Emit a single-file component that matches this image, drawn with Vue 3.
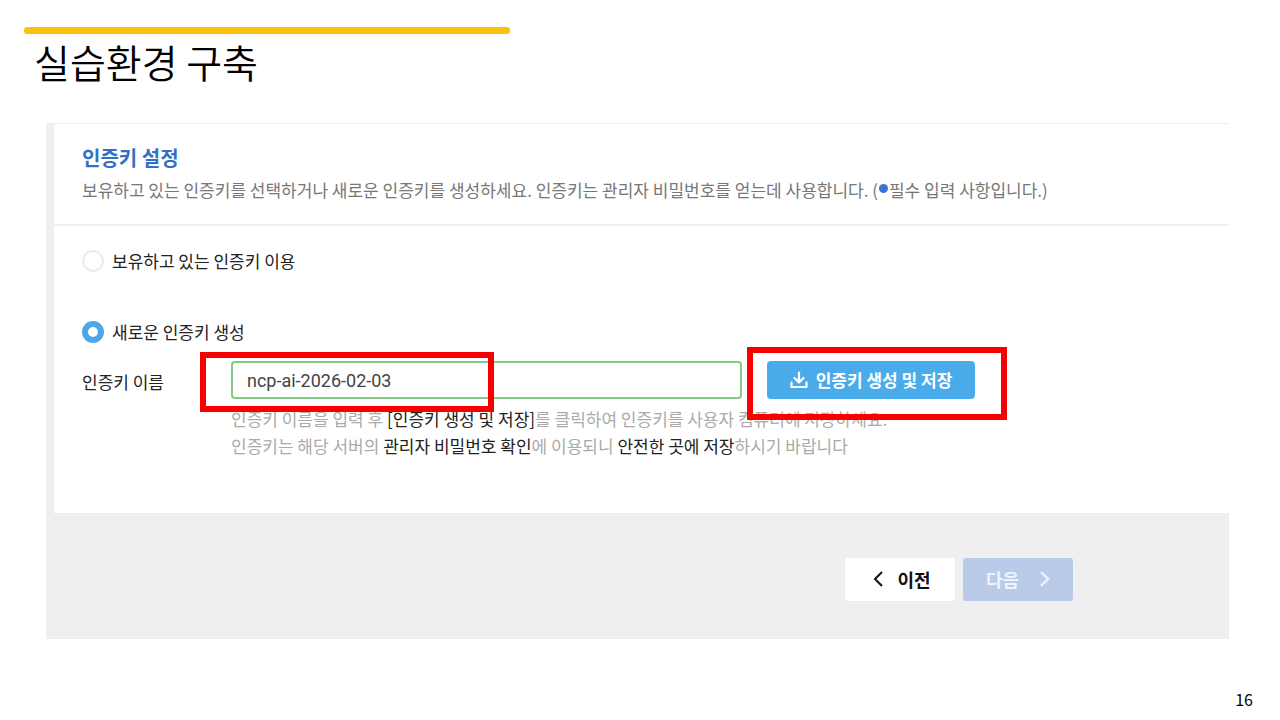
<template>
  <main class="slide">
    <div class="accent"></div>
    <h1 class="title">실습환경 구축</h1>

    <section class="panel">
      <form class="card" @submit.prevent>
        <header class="card-header">
          <h2>인증키 설정</h2>
          <p>
            보유하고 있는 인증키를 선택하거나 새로운 인증키를 생성하세요. 인증키는 관리자 비밀번호를 얻는데 사용합니다. (<span class="required"></span>필수 입력 사항입니다.)
          </p>
        </header>

        <div class="card-body">
          <div class="options">
            <label v-for="o in options" :key="o.value" class="option">
              <input v-model="mode" type="radio" name="mode" :value="o.value" />
              {{ o.label }}
            </label>
          </div>

          <div class="field">
            <label class="field-label" for="key-name">인증키 이름</label>
            <div class="field-main">
              <div class="controls">
                <div class="input-wrap">
                  <input id="key-name" v-model="keyName" class="key-input" type="text" />
                  <span class="mark mark-input"></span>
                </div>
                <div class="button-wrap">
                  <button class="create" type="button">
                    <svg width="18" height="18" viewBox="0 0 18 18" fill="none" stroke="currentColor" stroke-width="2.2" stroke-linecap="round" stroke-linejoin="round">
                      <path d="M9 1.500V11M4.500 7 9 11.500 13.500 7" />
                      <path d="M1.500 11.500V16H16.500V11.500" />
                    </svg>
                    인증키 생성 및 저장
                  </button>
                  <span class="mark mark-button"></span>
                </div>
              </div>
              <p class="help">
                인증키 이름을 입력 후 <b>[인증키 생성 및 저장]</b>를 클릭하여 인증키를 사용자 컴퓨터에 저장하세요.<br />
                인증키는 해당 서버의 <b>관리자 비밀번호 확인</b>에 이용되니 <b>안전한 곳에 저장</b>하시기 바랍니다
              </p>
            </div>
          </div>
        </div>
      </form>

      <div class="actions">
        <button class="nav prev" type="button">
          <svg width="10" height="16" viewBox="0 0 10 16" fill="none" stroke="currentColor" stroke-width="2">
            <path d="M9 1 2 8l7 7" />
          </svg>
          이전
        </button>
        <button class="nav next" type="button" disabled>
          다음
          <svg width="10" height="16" viewBox="0 0 10 16" fill="none" stroke="currentColor" stroke-width="2.4">
            <path d="m1 1 7 7-7 7" />
          </svg>
        </button>
      </div>
    </section>

    <footer class="page-number">16</footer>
  </main>
</template>

<script setup>
import { ref } from 'vue'

const options = [
  { value: 'existing', label: '보유하고 있는 인증키 이용' },
  { value: 'new', label: '새로운 인증키 생성' }
]

const mode = ref('new')
const keyName = ref('ncp-ai-2026-02-03')
</script>

<style>
body { margin: 0; background: #fff; }
</style>

<style scoped>
* { box-sizing: border-box; }
.slide {
  padding-top: 27px;
  font-family: "Noto Sans CJK KR", sans-serif;
  font-size: 17px;
  line-height: 28px;
  color: #222;
}
h1, h2, p { margin: 0; }
button, input { font: inherit; }

.accent { width: 38%; height: 7px; margin-left: 24px; border-radius: 3px; background: #fdc00c; }
.title {
  padding: 3px 34px 0;
  font-size: 39px;
  font-weight: 350;
  line-height: 48px;
  color: #000;
}

.panel { margin: 38px 51px 0 46px; padding: 1px 0 0 8px; background: #efefef; }
.card { background: #fff; border-radius: 4px 0 0 0; }
.card-header { padding: 20px 28px 20px; border-bottom: 2px solid #efefef; }
.card-header h2 { margin-bottom: 4px; font-size: 20px; font-weight: 700; line-height: 28px; color: #346fc6; }
.card-header p { color: #777; }
.required {
  display: inline-block;
  width: 9px;
  height: 9px;
  margin: 0 1px;
  border-radius: 50%;
  background: #3c74d4;
  vertical-align: 4px;
}

.card-body { padding: 21px 28px 54px; }
.options { display: flex; flex-direction: column; align-items: flex-start; gap: 43px; }
.option { display: flex; align-items: center; gap: 8px; }
.option input {
  appearance: none;
  width: 22px;
  height: 22px;
  margin: 0;
  border: 2px solid #ececec;
  border-radius: 50%;
  background: #fff;
}
.option input:checked { border: 6px solid #4aa8e8; }

.field { display: flex; margin-top: 15px; }
.field-label { flex: 0 0 149px; line-height: 42px; }
.field-main { flex: 1; min-width: 0; }
.controls { display: flex; gap: 25px; }
.input-wrap { position: relative; flex: 0 1 511px; }
.key-input {
  display: block;
  width: 100%;
  height: 38px;
  padding: 0 14px;
  border: 2px solid #83cb80;
  border-radius: 4px;
  background: #fff;
  font-family: Roboto, sans-serif;
  font-size: 18px;
  color: #444;
}
.button-wrap { position: relative; }
.create {
  display: flex;
  align-items: center;
  justify-content: center;
  gap: 8px;
  width: 208px;
  height: 38px;
  padding: 0;
  border: 0;
  border-radius: 4px;
  background: #4aabea;
  color: #fff;
  font-weight: 700;
}
/* red callouts over the two controls */
.mark { position: absolute; border: 6px solid #f80000; pointer-events: none; }
.mark-input { top: -9px; left: -31px; width: 294px; height: 60px; }
.mark-button { top: -14px; left: -20px; width: 260px; height: 73px; }

.help { margin-top: 6px; line-height: 27px; color: #aaa; }
.help b { font-weight: 400; color: #222; }

.actions { display: flex; justify-content: flex-end; gap: 8px; padding: 45px 156px 38px 0; }
.nav {
  display: flex;
  align-items: center;
  justify-content: center;
  width: 110px;
  height: 43px;
  padding: 0 0 2px;
  border: 0;
  border-radius: 3px;
  font-size: 18px;
  font-weight: 700;
}
.prev { gap: 14px; padding-left: 4px; background: #fff; color: #111; }
.next { gap: 21px; background: #bacbe9; color: #eff3fb; }

.page-number {
  padding: 46px 27px 0;
  font-size: 16px;
  text-align: right;
  color: #000;
}
</style>
